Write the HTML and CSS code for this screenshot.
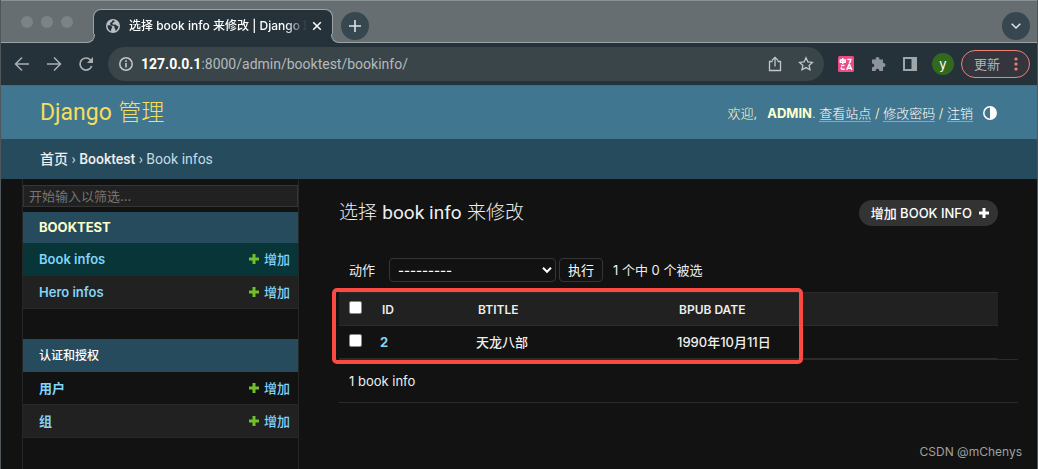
FILE: index.html
```html
<!DOCTYPE html>
<html lang="zh-Hans">
<head>
<meta charset="utf-8">
<title>选择 book info 来修改 | Django 站点管理员</title>
<link rel="stylesheet" href="styles.css">
</head>
<body>
<svg class="defs" width="0" height="0" aria-hidden="true">
  <symbol id="plus" viewBox="0 0 10 10"><path d="M3.500 0h3v3.500H10v3H6.500V10h-3V6.500H0v-3h3.500z"/></symbol>
</svg>
<div class="window">
  <div class="tabstrip">
    <div class="lights"><i></i><i></i><i></i></div>
    <div class="tab">
      <svg class="globe" width="14" height="14" viewBox="0 0 14 14"><circle cx="7" cy="7" r="7" fill="#b9bfc3"/><path d="M1.500 6.200l3 .1 1.600 1.500.2 1.300-1.200 1 .1 2.200C2.800 11.500 1.300 9 1.500 6.200zM6.300 1.500l2.500.1-.5 1.500-1.600.7-.3 1.300 1.200.7 1.900-.2 1.300 1.200 1.600.4c-.2 2.400-1.500 4-3 4.700l.1-1.500-1-1.200.2-1.500-1.500-.9-2-.2-1.200-1.400.4-1.600 1.500-.7z" fill="#25323a"/></svg>
      <span class="tab-title">选择 book info 来修改 | Django 站</span>
      <button class="plain" aria-label="关闭标签页"><svg width="10" height="10" viewBox="0 0 10 10"><path d="M1.200 1.200l7.600 7.600M8.800 1.200L1.200 8.800" stroke="#fff" stroke-width="1.500"/></svg></button>
    </div>
    <button class="round" aria-label="新标签页"><svg width="14" height="14" viewBox="0 0 14 14"><path d="M7 1v12M1 7h12" stroke="#dfe3e5" stroke-width="1.600"/></svg></button>
    <button class="round search-tabs" aria-label="搜索标签页"><svg width="12" height="12" viewBox="0 0 12 12"><path d="M1.700 3.800L6 8l4.300-4.200" fill="none" stroke="#dfe3e5" stroke-width="1.600"/></svg></button>
  </div>
  <div class="toolbar">
    <button class="plain" aria-label="后退"><svg width="16" height="16" viewBox="0 0 16 16"><path d="M15 8H2M8 1.500L1.500 8 8 14.500" fill="none" stroke="#aab0b4" stroke-width="1.500"/></svg></button>
    <button class="plain" aria-label="前进"><svg width="16" height="16" viewBox="0 0 16 16"><path d="M1 8h13M8 1.500L14.500 8 8 14.500" fill="none" stroke="#aab0b4" stroke-width="1.500"/></svg></button>
    <button class="plain" aria-label="重新加载"><svg width="16" height="16" viewBox="0 0 16 16"><path d="M13.700 10A6 6 0 1 1 12.500 4L14 5.500" fill="none" stroke="#aab0b4" stroke-width="1.700"/><path d="M15 1v6H9z" fill="#aab0b4"/></svg></button>
    <div class="omnibox">
      <svg width="14" height="14" viewBox="0 0 14 14"><circle cx="7" cy="7" r="6.200" fill="none" stroke="#c2c7ca" stroke-width="1.500"/><path d="M7 6v4.500M7 3.300V5" stroke="#c2c7ca" stroke-width="1.600"/></svg>
      <span class="url"><b>127.0.0.1</b>:8000/admin/booktest/bookinfo/</span>
      <button class="plain" aria-label="分享"><svg width="14" height="16" viewBox="0 0 14 16"><path d="M4.500 5.500h-3v9h11v-9h-3M7 10.500V1.500M3.900 4.500L7 1.400l3.100 3.100" fill="none" stroke="#c2c7ca" stroke-width="1.300"/></svg></button>
      <button class="plain" aria-label="收藏"><svg width="16" height="16" viewBox="0 0 16 16"><path d="M8 1.800l1.900 4.100 4.500.5-3.300 3 .9 4.400L8 11.600l-4 2.200.9-4.400-3.300-3 4.500-.5z" fill="none" stroke="#c2c7ca" stroke-width="1.300"/></svg></button>
    </div>
    <div class="extensions">
      <button class="plain" aria-label="翻译"><svg width="16" height="16" viewBox="0 0 16 16"><rect width="16" height="16" rx="1.500" fill="#ea4c89"/><path d="M2.300 4h4.900v2.300H2.300zM4.750 2v6M9.300 3.500h3.500c.2 1.800-.4 2.800-1.800 3.600M3 9.500h3.500M6.700 13.200H4.500c-1.500 0-1.800-1.200-.8-1.900M8.700 14l2.300-5.500h.5l2.300 5.500M9.500 12.300h3.500" fill="none" stroke="#fff" stroke-width="1.400"/></svg></button>
      <button class="plain" aria-label="扩展程序"><svg width="16" height="16" viewBox="0 0 16 16"><path d="M2 3.500h3.500V3a2 2 0 0 1 4 0v.5H13V7h.5a2 2 0 0 1 0 4H13v4H9.300v-.5a1.800 1.800 0 0 0-3.600 0v.5H2v-3.800h.5a1.800 1.800 0 0 0 0-3.600H2z" fill="#8d9499"/></svg></button>
      <button class="plain" aria-label="侧边栏"><svg width="16" height="16" viewBox="0 0 16 16"><path fill="#9fa6aa" fill-rule="evenodd" d="M1 1h14v14H1zM3 3v10h6.500V3z"/></svg></button>
      <button class="avatar" aria-label="用户资料">y</button>
    </div>
    <button class="update">更新<svg width="4" height="14" viewBox="0 0 4 14" fill="#ee8277"><circle cx="2" cy="2" r="1.600"/><circle cx="2" cy="7" r="1.600"/><circle cx="2" cy="12" r="1.600"/></svg></button>
  </div>

  <header class="site-header">
    <a class="brand" href="#"><span class="latin">Django</span> 管理</a>
    <div class="user-tools">
      <span class="welcome">欢迎,</span>
      <span><strong>ADMIN</strong>. <a href="#">查看站点</a> / <a href="#">修改密码</a> / <a href="#">注销</a></span>
      <button class="plain" aria-label="切换主题"><svg width="14" height="14" viewBox="0 0 14 14"><circle cx="7" cy="7" r="6.200" fill="none" stroke="#fff" stroke-width="1.500"/><path d="M7 1a6 6 0 0 1 0 12z" fill="#fff"/></svg></button>
    </div>
  </header>
  <nav class="breadcrumbs"><a href="#">首页</a> › <a href="#">Booktest</a> › Book infos</nav>

  <div class="page">
    <nav class="sidebar">
      <input class="filter" type="search" placeholder="开始输入以筛选..." aria-label="筛选导航项">
      <section class="module">
        <h2>BOOKTEST</h2>
        <div class="model current"><a href="#">Book infos</a><a class="add" href="#"><svg width="10" height="10"><use href="#plus"/></svg>增加</a></div>
        <div class="model shaded"><a href="#">Hero infos</a><a class="add" href="#"><svg width="10" height="10"><use href="#plus"/></svg>增加</a></div>
      </section>
      <section class="module">
        <h2 class="white">认证和授权</h2>
        <div class="model"><a href="#">用户</a><a class="add" href="#"><svg width="10" height="10"><use href="#plus"/></svg>增加</a></div>
        <div class="model shaded"><a href="#">组</a><a class="add" href="#"><svg width="10" height="10"><use href="#plus"/></svg>增加</a></div>
      </section>
    </nav>
    <main class="content">
      <div class="heading">
        <h1>选择 <span class="latin">book info</span> 来修改</h1>
        <a class="add-object" href="#">增加 BOOK INFO<svg width="10" height="10"><use href="#plus"/></svg></a>
      </div>
      <form class="actions">
        <label for="action">动作</label>
        <span class="select-box"><select id="action"><option>---------</option></select><svg width="10" height="8" viewBox="0 0 10 8"><path d="M1 1.800l4 4 4-4" fill="none" stroke="#fff" stroke-width="2"/></svg></span>
        <button type="button" class="run">执行</button>
        <span class="counter">1 个中 0 个被选</span>
      </form>
      <div class="results">
        <table>
          <colgroup><col class="c-check"><col class="c-id"><col class="c-title"><col></colgroup>
          <thead><tr><th><input type="checkbox" aria-label="全选"></th><th>ID</th><th>BTITLE</th><th>BPUB DATE</th></tr></thead>
          <tbody><tr><td><input type="checkbox" aria-label="选择 2"></td><td><a href="#">2</a></td><td>天龙八部</td><td>1990年10月11日</td></tr></tbody>
        </table>
        <div class="highlight"></div>
      </div>
      <p class="paginator">1 book info</p>
    </main>
  </div>
  <div class="watermark">CSDN @mChenys</div>
</div>
</body>
</html>
```

FILE: styles.css
```css
* { box-sizing: border-box; }
body {
  margin: 0;
  background: #121212;
  color: #eee;
  font: 13px/18px Inter, "Noto Sans CJK SC", sans-serif;
}
a { color: #81d4fa; text-decoration: none; }
button { font: inherit; color: inherit; cursor: pointer; }
svg { display: block; flex: none; }
.defs { position: absolute; }
.window {
  position: relative;
  min-height: 100vh;
  display: flex;
  flex-direction: column;
  border: solid #50575a;
  border-width: 0 1px;
  overflow: hidden;
}
.plain { padding: 0; border: 0; background: none; }
.latin { font-weight: 400; font-family: Roboto, sans-serif; }

/* browser chrome */
.tabstrip {
  display: flex;
  align-items: center;
  height: 43px;
  padding: 9px 7px 0 20px;
  background: #666e71;
  border-top: 1px solid #899295;
  border-bottom: 1px solid #9aa4a7;
}
.lights { display: flex; gap: 8px; width: 72px; margin-top: -8px; }
.lights i { width: 12px; height: 12px; border-radius: 50%; background: #7d8286; }
.tab {
  position: relative;
  display: flex;
  align-items: center;
  gap: 9px;
  width: 240px;
  height: 34px;
  padding: 0 10px 2px 12px;
  background: #25323a;
  border: 1px solid #9aa4a7;
  border-bottom: 0;
  border-radius: 8px 8px 0 0;
  font-size: 12px;
  font-weight: 500;
  color: #fff;
}
.tab::before, .tab::after {
  content: "";
  position: absolute;
  bottom: 0;
  width: 8px;
  height: 8px;
  background: #666e71;
  border-bottom: 1px solid #9aa4a7;
}
.tab::before {
  left: -8px;
  border-right: 1px solid #9aa4a7;
  border-bottom-right-radius: 8px;
  box-shadow: 2px 2px 0 #25323a;
}
.tab::after {
  right: -8px;
  border-left: 1px solid #9aa4a7;
  border-bottom-left-radius: 8px;
  box-shadow: -2px 2px 0 #25323a;
}
.tab-title {
  flex: 1;
  margin-right: -4px;
  overflow: hidden;
  white-space: nowrap;
  mask-image: linear-gradient(to right, #000 88%, transparent);
}
.round {
  display: grid;
  place-items: center;
  width: 28px;
  height: 28px;
  margin-left: 8px;
  padding: 0;
  border: 0;
  border-radius: 50%;
  background: #37474f;
}
.search-tabs { margin-left: auto; }
.toolbar {
  display: flex;
  align-items: center;
  gap: 16px;
  height: 43px;
  padding: 0 7px 0 13px;
  background: #25323a;
  border-bottom: 1px solid #56666e;
}
.omnibox {
  flex: 1;
  display: flex;
  align-items: center;
  gap: 16px;
  height: 34px;
  padding: 0 10px 0 11px;
  margin-left: -2px;
  border-radius: 17px;
  background: #3a454a;
}
.url { flex: 1; margin-left: -8px; font: 14px/20px Roboto, sans-serif; color: #b4babd; }
.url b { font-weight: 700; color: #fff; }
.extensions { display: flex; align-items: center; gap: 16px; margin-left: -2px; }
.avatar {
  width: 22px;
  height: 22px;
  margin-left: -2px;
  padding: 0;
  border: 0;
  border-radius: 50%;
  background: #33691e;
  color: #fff;
  line-height: 20px;
}
.update {
  display: flex;
  align-items: center;
  justify-content: space-between;
  width: 69px;
  height: 28px;
  margin-left: -9px;
  padding: 0 11px 0 12px;
  border: 1px solid #ee8277;
  border-radius: 14px;
  background: #35363d;
  color: #aeb3b7;
}

/* site header */
.site-header {
  display: flex;
  align-items: center;
  justify-content: space-between;
  height: 53px;
  padding: 0 40px 0 39px;
  background: #417690;
}
.brand { font-size: 23px; line-height: 30px; font-weight: 300; color: #f5dd5d; }
.user-tools { display: flex; align-items: center; gap: 10px; font-weight: 300; color: #ffc; }
.user-tools strong { font-weight: 700; }
.user-tools a { color: #fff; border-bottom: 1px solid #86a8b8; }
.breadcrumbs {
  padding: 11px 39px;
  background: #264b5d;
  color: #c4dce8;
  font-family: Roboto, "Noto Sans CJK SC", sans-serif;
  font-size: 14px;
}
.breadcrumbs a { color: #eee; font-weight: 500; }

/* page */
.page { flex: 1; display: flex; }
.sidebar { width: 277px; margin-left: 21px; padding-top: 6px; border: solid #262626; border-width: 0 1px; }
.filter {
  display: block;
  width: 100%;
  height: 22px;
  margin-bottom: 5px;
  padding: 0 5px;
  border: 1px solid #353535;
  background: #212121;
  color: #eee;
  font: inherit;
  appearance: none;
}
.filter::placeholder { color: #757575; }
.module { margin-bottom: 30px; }
.module h2 {
  margin: 0;
  padding: 7px 16px;
  background: #264b5d;
  color: #ffc;
  font-size: 13px;
  font-weight: 700;
  line-height: 17px;
}
.module h2.white { padding: 8px 16px; color: #fff; font-size: 12px; font-weight: 500; }
.model {
  display: flex;
  justify-content: space-between;
  padding: 7px 8px 7px 16px;
  border-bottom: 1px solid #282828;
  font-weight: 600;
}
.current { background: #083537; }
.shaded { background: #212121; }
.add { display: flex; align-items: center; gap: 5px; font-weight: 500; }
.add svg { fill: #70bf2b; }

.content { flex: 1; padding: 21px 19px 0 40px; }
.heading { display: flex; justify-content: space-between; align-items: center; margin: 0 20px 32px 0; }
h1 { margin: 0; font-size: 19px; line-height: 26px; font-weight: 300; color: #eee; }
.add-object {
  display: flex;
  align-items: center;
  gap: 7px;
  height: 26px;
  padding: 0 9px 0 12px;
  border-radius: 13px;
  background: #333;
  color: #fff;
  font-weight: 500;
}
.add-object svg { fill: #fff; }
.actions { display: flex; align-items: center; height: 24px; margin: 0 0 10px; padding-left: 10px; }
.select-box { display: grid; align-items: center; width: 167px; margin: 0 3px 0 14px; }
.select-box > * { grid-area: 1 / 1; }
.select-box svg { justify-self: end; margin-right: 4px; pointer-events: none; }
.select-box select {
  width: 100%;
  height: 24px;
  padding: 0 8px;
  border: 1px solid #353535;
  border-radius: 4px;
  background: #121212;
  color: #fff;
  font: inherit;
  font-weight: 500;
  appearance: none;
}
.run { height: 24px; width: 44px; padding: 0; border: 1px solid #353535; border-radius: 4px; background: #121212; color: #fff; }
.counter { margin-left: 10px; }
.results { position: relative; margin-right: 20px; }
table { width: 100%; table-layout: fixed; border-collapse: separate; border-spacing: 0; }
.c-check { width: 33px; }
.c-id { width: 96px; }
.c-title { width: 201px; }
th, td { height: 33px; padding: 0 8px; text-align: left; border-bottom: 1px solid #2b2b2b; }
th { height: 34px; padding: 2px 10px 0; background: #212121; border-top: 1px solid #2b2b2b; font-size: 12px; font-weight: 600; }
td { font-weight: 500; }
td a { font-weight: 700; }
th:first-child, td:first-child { padding: 0 0 0 10px; }
table input {
  display: block;
  width: 13px;
  height: 13px;
  margin: 0 0 4px;
  appearance: none;
  background: #fff;
  border: 1px solid #888;
  border-radius: 2px;
}
.highlight {
  position: absolute;
  top: -4px;
  left: -7px;
  width: 471px;
  height: 76px;
  border: 4px solid #fa4a42;
  border-radius: 5px;
}
.paginator { margin: 0; padding: 12px 10px; border: solid #2b2b2b; border-width: 1px 0; }
.watermark {
  position: absolute;
  right: 15px;
  bottom: 8px;
  color: #a0a0a0;
  font-size: 12px;
}
```
